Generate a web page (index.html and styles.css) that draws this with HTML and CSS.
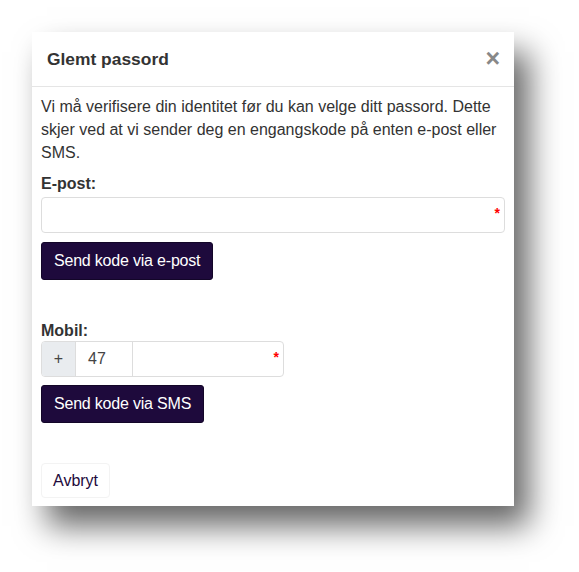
FILE: index.html
```html
<!DOCTYPE html>
<html lang="no">
<head>
<meta charset="utf-8">
<link rel="stylesheet" href="styles.css">
</head>
<body>
<div class="modal">
  <div class="modal-header">
    <h4 class="modal-title">Glemt passord</h4>
    <span class="close">&times;</span>
  </div>
  <div class="modal-body">
    <p class="intro">Vi må verifisere din identitet før du kan velge ditt passord. Dette skjer ved at vi sender deg en engangskode på enten e-post eller SMS.</p>
    <label class="label epost">E-post:</label>
    <div class="input"><span class="req">*</span></div>
    <button class="btn primary">Send kode via e-post</button>
    <label class="label mobil">Mobil:</label>
    <div class="group">
      <span class="addon">+</span>
      <span class="cc">47</span>
      <span class="num"><span class="req">*</span></span>
    </div>
    <button class="btn primary">Send kode via SMS</button>
    <div class="footer">
      <button class="btn cancel">Avbryt</button>
    </div>
  </div>
</div>
</body>
</html>
```
FILE: styles.css
```css
html, body {
  margin: 0;
  padding: 0;
  background: #fff;
  height: 100%;
}
body {
  padding: 32px 0 0 32px;
  box-sizing: border-box;
  font-family: "Liberation Sans", Arial, sans-serif;
  color: #333;
}
.modal {
  width: 482px;
  height: 474px;
  background: #fff;
  box-shadow: 15px 20px 30px rgba(0,0,0,0.6);
  box-sizing: border-box;
}
.modal-header {
  height: 55px;
  border-bottom: 1px solid #e5e5e5;
  display: flex;
  align-items: center;
  justify-content: space-between;
  padding: 0 14px 0 15px;
  box-sizing: border-box;
}
.modal-title {
  margin: 0;
  font-size: 17.4px;
  font-weight: bold;
  color: #333;
  padding-top: 1px;
}
.close {
  font-size: 25px;
  font-weight: bold;
  color: #888;
  line-height: 1;
  margin-top: -2px;
}
.modal-body {
  padding: 8px 9px 0 9px;
  display: flex;
  flex-direction: column;
  align-items: flex-start;
}
.intro {
  margin: 0;
  font-size: 16px;
  line-height: 23px;
  color: #333;
}
.label {
  font-weight: bold;
  font-size: 16px;
  line-height: 20px;
  color: #333;
}
.epost {
  margin-top: 10px;
  margin-bottom: 3px;
}
.input {
  width: 464px;
  height: 36px;
  border: 1px solid #ddd;
  border-radius: 4px;
  box-sizing: border-box;
  display: flex;
  justify-content: flex-end;
  align-items: center;
  padding-right: 4px;
}
.req {
  color: #f00;
  font-size: 14px;
  font-weight: bold;
  margin-top: -4px;
}
.btn {
  font-family: "Liberation Sans", Arial, sans-serif;
  font-size: 16px;
  cursor: pointer;
}
.primary {
  margin-top: 9px;
  background: #1e0a3c;
  color: #fff;
  border: 1px solid #130628;
  border-radius: 3px;
  height: 38px;
  padding: 0 12px;
  letter-spacing: -0.2px;
}
.mobil {
  margin-top: 41px;
  margin-bottom: 0;
}
.group {
  display: flex;
  width: 243px;
  height: 36px;
  border: 1px solid #ddd;
  border-radius: 4px;
  box-sizing: border-box;
  overflow: hidden;
  font-size: 16px;
}
.addon {
  width: 33px;
  background: #e9ecef;
  border-right: 1px solid #ddd;
  display: flex;
  align-items: center;
  justify-content: center;
  color: #444;
}
.cc {
  width: 57px;
  border-right: 1px solid #ddd;
  display: flex;
  align-items: center;
  padding-left: 12px;
  box-sizing: border-box;
  color: #444;
}
.num {
  flex: 1;
  display: flex;
  justify-content: flex-end;
  align-items: center;
  padding-right: 4px;
}
.group + .primary {
  margin-top: 8px;
}
.footer {
  margin-top: 40px;
}
.cancel {
  background: #fff;
  color: #1e0a3c;
  border: 1px solid #f3f3f3;
  border-radius: 4px;
  height: 35px;
  padding: 0 11px;
}
```
